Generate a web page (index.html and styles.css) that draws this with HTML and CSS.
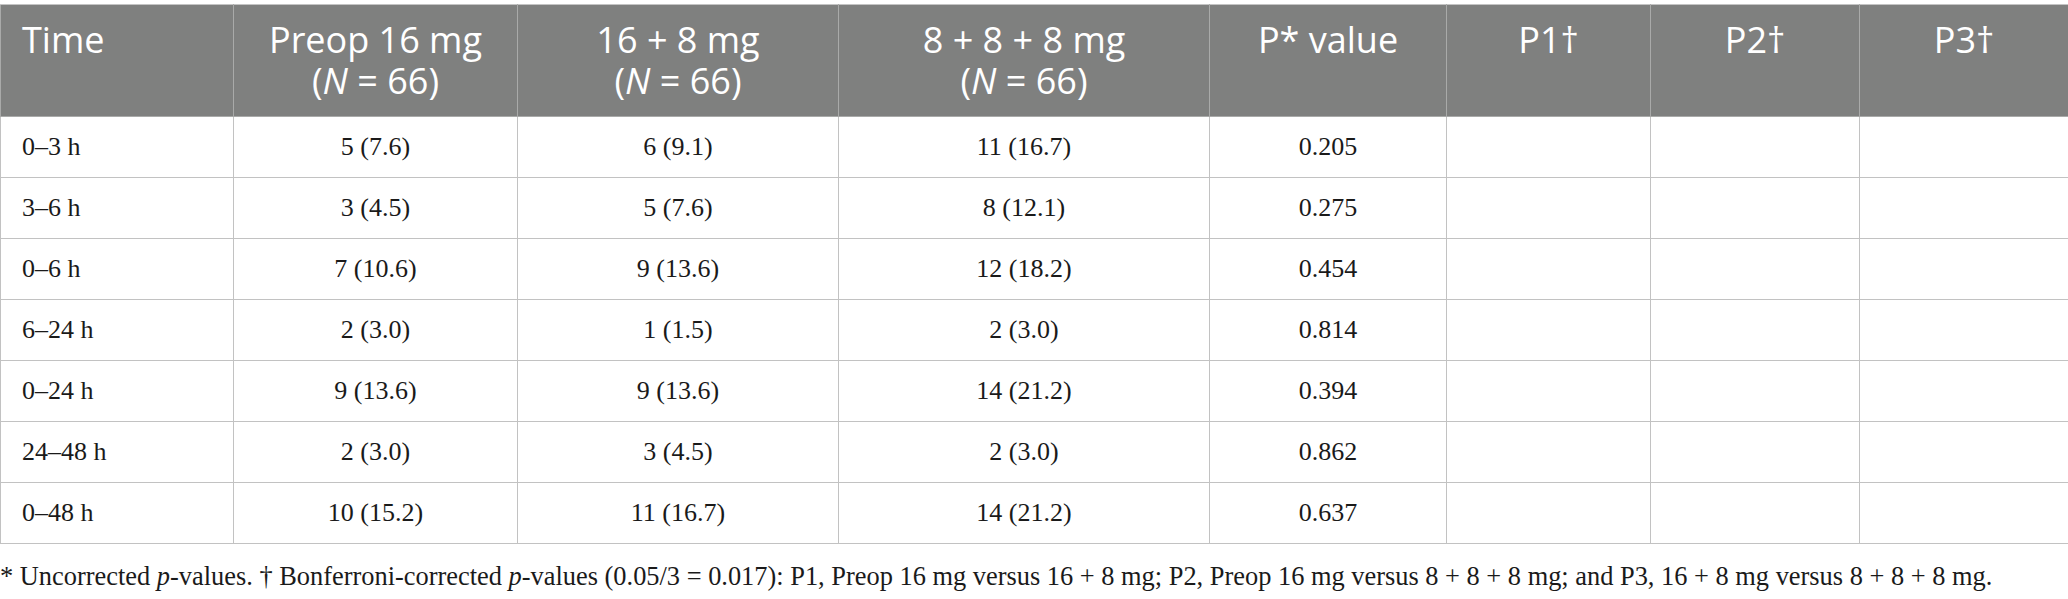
FILE: index.html
```html
<!DOCTYPE html>
<html lang="en">
<head>
<meta charset="utf-8">
<title>Table</title>
<link rel="stylesheet" href="styles.css">
</head>
<body>
<div class="page">
<table class="data">
  <colgroup>
    <col class="c-time">
    <col class="c-a">
    <col class="c-b">
    <col class="c-c">
    <col class="c-p">
    <col class="c-p1">
    <col class="c-p2">
    <col class="c-p3">
  </colgroup>
  <thead>
    <tr>
      <th class="left">Time</th>
      <th><span class="ln">Preop 16 mg</span><span class="ln">(<i>N</i> = 66)</span></th>
      <th><span class="ln">16 + 8 mg</span><span class="ln">(<i>N</i> = 66)</span></th>
      <th><span class="ln">8 + 8 + 8 mg</span><span class="ln">(<i>N</i> = 66)</span></th>
      <th>P* value</th>
      <th>P1†</th>
      <th>P2†</th>
      <th>P3†</th>
    </tr>
  </thead>
  <tbody>
    <tr><td class="left">0–3 h</td><td>5 (7.6)</td><td>6 (9.1)</td><td>11 (16.7)</td><td>0.205</td><td></td><td></td><td></td></tr>
    <tr><td class="left">3–6 h</td><td>3 (4.5)</td><td>5 (7.6)</td><td>8 (12.1)</td><td>0.275</td><td></td><td></td><td></td></tr>
    <tr><td class="left">0–6 h</td><td>7 (10.6)</td><td>9 (13.6)</td><td>12 (18.2)</td><td>0.454</td><td></td><td></td><td></td></tr>
    <tr><td class="left">6–24 h</td><td>2 (3.0)</td><td>1 (1.5)</td><td>2 (3.0)</td><td>0.814</td><td></td><td></td><td></td></tr>
    <tr><td class="left">0–24 h</td><td>9 (13.6)</td><td>9 (13.6)</td><td>14 (21.2)</td><td>0.394</td><td></td><td></td><td></td></tr>
    <tr><td class="left">24–48 h</td><td>2 (3.0)</td><td>3 (4.5)</td><td>2 (3.0)</td><td>0.862</td><td></td><td></td><td></td></tr>
    <tr><td class="left">0–48 h</td><td>10 (15.2)</td><td>11 (16.7)</td><td>14 (21.2)</td><td>0.637</td><td></td><td></td><td></td></tr>
  </tbody>
</table>
<p class="note">* Uncorrected <i>p</i>-values. † Bonferroni-corrected <i>p</i>-values (0.05/3 = 0.017): P1, Preop 16 mg versus 16 + 8 mg; P2, Preop 16 mg versus 8 + 8 + 8 mg; and P3, 16 + 8 mg versus 8 + 8 + 8 mg.</p>
</div>
</body>
</html>
```

FILE: styles.css
```css
html, body {
  margin: 0;
  padding: 0;
  background: #ffffff;
}

.page {
  padding-top: 4px;
  width: 2068px;
}

.data {
  border-collapse: collapse;
  table-layout: fixed;
  width: 2068px;
  font-family: "Liberation Serif", "Times New Roman", serif;
  font-size: 26px;
  color: #1a1a1a;
}

.c-time { width: 233px; }
.c-a { width: 284px; }
.c-b { width: 321px; }
.c-c { width: 371px; }
.c-p { width: 237px; }
.c-p1 { width: 204px; }
.c-p2 { width: 209px; }
.c-p3 { width: 209px; }

.data th {
  background: #7f807f;
  color: #ffffff;
  font-family: "Open Sans", "Noto Sans", sans-serif;
  font-weight: 400;
  font-size: 36px;
  line-height: 41px;
  text-align: center;
  vertical-align: top;
  padding: 14px 10px 13px;
  border: 1px solid #a9aaa9;
  border-top-color: #c4c4c4;
  height: 84px;
  box-sizing: content-box;
}

.data th .ln {
  display: block;
  height: 41px;
  line-height: 41px;
  white-space: nowrap;
}

.data th i {
  font-style: italic;
}

.data td {
  border: 1px solid #c2c2c2;
  height: 60px;
  padding: 0 10px;
  text-align: center;
  vertical-align: middle;
  line-height: 30px;
}

.data .left {
  text-align: left;
  padding-left: 21px;
}

.note {
  margin: 17px 0 0 0;
  font-family: "Liberation Serif", "Times New Roman", serif;
  font-size: 26.4px;
  line-height: 30px;
  color: #1a1a1a;
  white-space: nowrap;
}
```
